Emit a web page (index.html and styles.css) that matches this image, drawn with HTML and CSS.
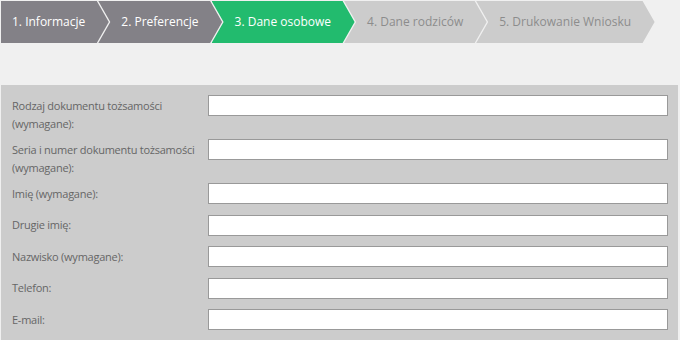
FILE: index.html
```html
<!DOCTYPE html>
<html lang="pl">
<head>
    <meta charset="UTF-8">
    <meta name="viewport" content="width=device-width, initial-scale=1.0">
    <title>Dane osobowe</title>
    <link rel="stylesheet" href="styles.css">
</head>
<body>

    <div class="steps">
        <div class="step step-done step-first">1. Informacje</div>
        <div class="step step-done">2. Preferencje</div>
        <div class="step step-active">3. Dane osobowe</div>
        <div class="step">4. Dane rodziców</div>
        <div class="step">5. Drukowanie Wniosku</div>
    </div>

    <form class="panel">
        <div class="row row-tall">
            <label for="docType">Rodzaj dokumentu tożsamości (wymagane):</label>
            <input type="text" id="docType" name="docType">
        </div>
        <div class="row row-tall">
            <label for="docNumber">Seria i numer dokumentu tożsamości (wymagane):</label>
            <input type="text" id="docNumber" name="docNumber">
        </div>
        <div class="row">
            <label for="firstName">Imię (wymagane):</label>
            <input type="text" id="firstName" name="firstName">
        </div>
        <div class="row">
            <label for="secondName">Drugie imię:</label>
            <input type="text" id="secondName" name="secondName">
        </div>
        <div class="row">
            <label for="lastName">Nazwisko (wymagane):</label>
            <input type="text" id="lastName" name="lastName">
        </div>
        <div class="row">
            <label for="phone">Telefon:</label>
            <input type="text" id="phone" name="phone">
        </div>
        <div class="row">
            <label for="email">E-mail:</label>
            <input type="text" id="email" name="email">
        </div>
    </form>

</body>
</html>
```

FILE: styles.css
```css
body {
    font-family: "Open Sans", sans-serif;
    background-color: #f0f0f0;
    margin: 0;
    padding: 1px 2px 0 1px;
}
.steps {
    display: flex;
    height: 42px;
}
.step {
    line-height: 42px;
    font-size: 12px;
    color: #8c8c8c;
    background-color: #cccccc;
    padding: 0 23.5px 0 23px;
    margin-left: -10.5px;
    white-space: nowrap;
    clip-path: polygon(0 0, calc(100% - 12px) 0, 100% 50%, calc(100% - 12px) 100%, 0 100%, 12px 50%);
}
.step-first {
    margin-left: 0;
    padding-left: 11px;
    clip-path: polygon(0 0, calc(100% - 12px) 0, 100% 50%, calc(100% - 12px) 100%, 0 100%);
}
.step-done {
    background-color: #838187;
    color: #ffffff;
}
.step-active {
    background-color: #22bb6e;
    color: #ffffff;
}
.panel {
    margin-top: 42px;
    background-color: #cccccc;
    padding: 10px 10px 1px 11px;
}
.row {
    display: flex;
    align-items: flex-start;
    margin-bottom: 10.5px;
}
.row-tall {
    margin-bottom: 6.5px;
}
.row label {
    width: 196px;
    flex-shrink: 0;
    font-size: 11px;
    letter-spacing: -0.25px;
    line-height: 18px;
    padding-top: 1.5px;
    color: #666666;
}
.row input {
    flex: 1;
    height: 21px;
    margin: 0;
    border: 1px solid #999999;
    box-sizing: border-box;
    background-color: #ffffff;
}
```
